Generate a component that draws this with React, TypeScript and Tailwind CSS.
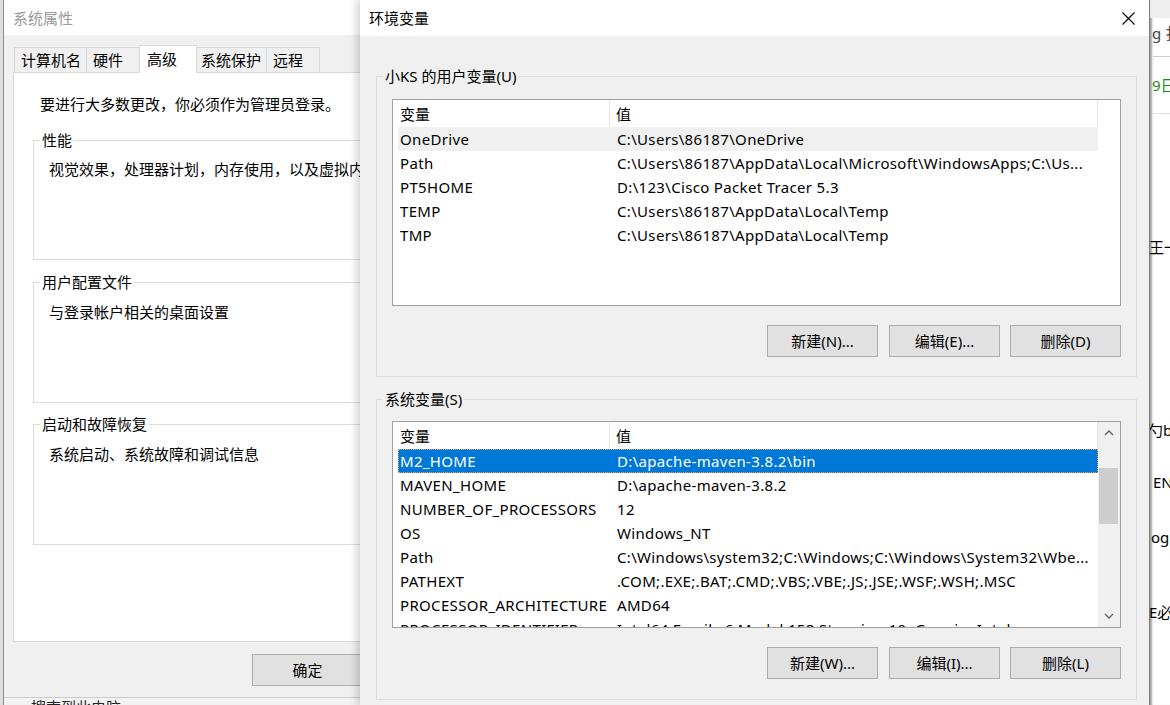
import React from "react";

const userRows: [string, string][] = [
  ["OneDrive", "C:\\Users\\86187\\OneDrive"],
  ["Path", "C:\\Users\\86187\\AppData\\Local\\Microsoft\\WindowsApps;C:\\Us..."],
  ["PT5HOME", "D:\\123\\Cisco Packet Tracer 5.3"],
  ["TEMP", "C:\\Users\\86187\\AppData\\Local\\Temp"],
  ["TMP", "C:\\Users\\86187\\AppData\\Local\\Temp"],
];

const sysRows: [string, string][] = [
  ["M2_HOME", "D:\\apache-maven-3.8.2\\bin"],
  ["MAVEN_HOME", "D:\\apache-maven-3.8.2"],
  ["NUMBER_OF_PROCESSORS", "12"],
  ["OS", "Windows_NT"],
  ["Path", "C:\\Windows\\system32;C:\\Windows;C:\\Windows\\System32\\Wbe..."],
  ["PATHEXT", ".COM;.EXE;.BAT;.CMD;.VBS;.VBE;.JS;.JSE;.WSF;.WSH;.MSC"],
  ["PROCESSOR_ARCHITECTURE", "AMD64"],
  ["PROCESSOR_IDENTIFIER", "Intel64 Family 6 Model 158 Stepping 10, GenuineIntel"],
];

function Chevron({ down }: { down?: boolean }) {
  return (
    <svg width="10" height="6" viewBox="0 0 10 6">
      <path
        d={down ? "M1 1 L5 5 L9 1" : "M1 5 L5 1 L9 5"}
        fill="none"
        stroke="#606060"
        strokeWidth="1.3"
      />
    </svg>
  );
}

function ListView({
  rows,
  selectedIndex,
  hoverIndex,
  scroll,
}: {
  rows: [string, string][];
  selectedIndex?: number;
  hoverIndex?: number;
  scroll?: boolean;
}) {
  return (
    <div className="flex h-[207px] w-[729px] overflow-hidden border border-[#a0a0a0] bg-white">
      <div className="flex min-w-0 flex-1 flex-col overflow-hidden">
        <div className="flex h-[27px] w-[705px] shrink-0">
          <div className="flex w-[217px] items-center border-r border-[#e5e5e5] pl-[7px]">变量</div>
          <div className="flex flex-1 items-center border-r border-[#e5e5e5] pl-[6px]">值</div>
        </div>
        {rows.map(([n, v], i) => {
          const sel = i === selectedIndex;
          const hov = i === hoverIndex;
          return (
            <div
              key={n + i}
              className={`ml-[5px] flex h-[24px] w-[700px] shrink-0 items-center whitespace-nowrap tracking-[0.33px] ${
                sel
                  ? "bg-[#0078d7] text-white outline-1 outline-dotted -outline-offset-1 outline-[#e9a25b]"
                  : hov
                  ? "bg-[#f0f0f0]"
                  : ""
              }`}
            >
              <div className="w-[219px] shrink-0 pl-[2px]">{n}</div>
              <div className="min-w-0 flex-1 overflow-hidden">{v}</div>
            </div>
          );
        })}
      </div>
      {scroll && (
        <div className="flex w-[22px] shrink-0 flex-col bg-[#f0f0f0]">
          <div className="flex h-[22px] shrink-0 items-center justify-center">
            <Chevron />
          </div>
          <div className="h-[24px] shrink-0" />
          <div className="ml-[1px] h-[56px] w-[19px] shrink-0 bg-[#cdcdcd]" />
          <div className="flex-1" />
          <div className="flex h-[22px] shrink-0 items-center justify-center">
            <Chevron down />
          </div>
        </div>
      )}
    </div>
  );
}

function Btn({ children, className = "" }: { children: React.ReactNode; className?: string }) {
  return (
    <div
      className={`flex h-[32px] w-[111px] shrink-0 items-center justify-center border border-[#adadad] bg-[#e1e1e1] ${className}`}
    >
      {children}
    </div>
  );
}

function GroupBox({
  label,
  bg,
  className = "",
  children,
}: {
  label: string;
  bg: string;
  className?: string;
  children?: React.ReactNode;
}) {
  return (
    <div className={`relative border border-[#dcdcdc] ${className}`}>
      <span className={`absolute left-[6px] top-[-11px] px-[2px] leading-[20px] ${bg}`}>{label}</span>
      {children}
    </div>
  );
}

function Tab({ label, cls, selected }: { label: string; cls: string; selected?: boolean }) {
  return (
    <div
      className={`-ml-px flex shrink-0 items-center border border-b-0 border-[#d9d9d9] first:ml-0 ${cls} ${
        selected ? "relative z-10 -mb-px h-[28px] bg-white pb-[2px]" : "h-[25px] bg-[#f0f0f0]"
      }`}
    >
      {label}
    </div>
  );
}

export default function App() {
  return (
    <div className="relative h-[705px] w-[1170px] overflow-hidden bg-[#f3f3f3] font-['Noto_Sans','Noto_Sans_CJK_SC',sans-serif] text-[15px] leading-[20px] text-black">
      {/* background: left edge strip */}
      <div className="absolute left-0 top-0 h-[705px] w-[4px] border-r border-[#8a8a8a] bg-[#dedede]" />
      {/* background: bottom text under left window */}
      <div className="absolute left-[31px] top-[697px] whitespace-nowrap leading-[20px] text-[#222]">搜索到此电脑</div>

      {/* background: right strip (browser page) */}
      <div className="absolute left-[1150px] top-0 h-[705px] w-[20px] overflow-hidden bg-white shadow-[inset_3px_0_2px_-1px_rgba(0,0,0,0.35)]">
        <div className="h-[18px] bg-[#eeeeee]" />
        <div className="absolute left-[2px] top-[23px] whitespace-nowrap text-[#444]">g 扌</div>
        <div className="absolute left-[3px] top-[56px] h-px w-[20px] bg-[#cfcfcf]" />
        <div className="absolute left-[2px] top-[75px] whitespace-nowrap text-[#1b8a1b]">9日</div>
        <div className="absolute left-[3px] top-[113px] h-px w-[20px] bg-[#e0e0e0]" />
        <div className="absolute left-[-1px] top-[237px] whitespace-nowrap">王一</div>
        <div className="absolute left-[-2px] top-[420px] whitespace-nowrap">勺b</div>
        <div className="absolute left-[3px] top-[472px] whitespace-nowrap">EN_</div>
        <div className="absolute left-[1px] top-[527px] whitespace-nowrap">og:</div>
        <div className="absolute left-[-1px] top-[602px] whitespace-nowrap">E必</div>
      </div>

      {/* 系统属性 window */}
      <div className="absolute left-[4px] top-0 flex h-[698px] w-[430px] flex-col border-b border-[#cccccc] bg-[#f0f0f0]">
        <div className="flex h-[35px] shrink-0 items-center bg-white pl-[9px] text-[#9a9a9a]">系统属性</div>
        <div className="ml-[10px] mt-[10px] flex h-[27px] shrink-0 items-end">
          <Tab label="计算机名" cls="w-[73px] pl-[6px]" />
          <Tab label="硬件" cls="w-[54px] pl-[6px]" />
          <Tab label="高级" cls="w-[58px] pl-[7px]" selected />
          <Tab label="系统保护" cls="w-[71px] pl-[4px]" />
          <Tab label="远程" cls="w-[54px] pl-[6px]" />
        </div>
        <div className="ml-[9px] flex h-[570px] w-[420px] shrink-0 flex-col border border-[#d9d9d9] bg-white pt-[21px]">
          <div className="pl-[26px]">要进行大多数更改，你必须作为管理员登录。</div>
          <GroupBox label="性能" bg="bg-white" className="ml-[19px] mt-[26px] h-[120px] w-[380px] pl-[15px] pt-[18px]">
            <div className="whitespace-nowrap">视觉效果，处理器计划，内存使用，以及虚拟内存</div>
          </GroupBox>
          <GroupBox label="用户配置文件" bg="bg-white" className="ml-[19px] mt-[22px] h-[121px] w-[380px] pl-[15px] pt-[19px]">
            <div>与登录帐户相关的桌面设置</div>
          </GroupBox>
          <GroupBox label="启动和故障恢复" bg="bg-white" className="ml-[19px] mt-[21px] h-[121px] w-[380px] pl-[15px] pt-[19px]">
            <div>系统启动、系统故障和调试信息</div>
          </GroupBox>
        </div>
        <Btn className="ml-[248px] mt-[12px]">确定</Btn>
      </div>

      {/* 环境变量 window */}
      <div className="absolute left-[360px] top-0 flex h-[705px] w-[790px] flex-col border-r border-[#7a7a7a] bg-[#f0f0f0] shadow-[-4px_0_7px_rgba(0,0,0,0.16)]">
        <div className="flex h-[36px] shrink-0 items-center justify-between bg-white pl-[9px]">
          <span>环境变量</span>
          <div className="flex h-[36px] w-[41px] items-center justify-center">
            <svg width="13" height="13" viewBox="0 0 13 13">
              <path d="M0.5 0.5 L12.5 12.5 M12.5 0.5 L0.5 12.5" stroke="#000" strokeWidth="1.1" fill="none" />
            </svg>
          </div>
        </div>

        <GroupBox
          label="小KS 的用户变量(U)"
          bg="bg-[#f0f0f0]"
          className="ml-[16px] mt-[40px] w-[761px] shrink-0 px-[15px] pb-[19px] pt-[22px]"
        >
          <ListView rows={userRows} hoverIndex={0} />
          <div className="mt-[19px] flex justify-end">
            <Btn>新建(N)...</Btn>
            <Btn className="ml-[11px]">编辑(E)...</Btn>
            <Btn className="ml-[10px]">删除(D)</Btn>
          </div>
        </GroupBox>

        <GroupBox
          label="系统变量(S)"
          bg="bg-[#f0f0f0]"
          className="ml-[16px] mt-[22px] w-[761px] shrink-0 px-[15px] pb-[20px] pt-[21px]"
        >
          <ListView rows={sysRows} selectedIndex={0} scroll />
          <div className="mt-[19px] flex justify-end">
            <Btn>新建(W)...</Btn>
            <Btn className="ml-[11px]">编辑(I)...</Btn>
            <Btn className="ml-[10px]">删除(L)</Btn>
          </div>
        </GroupBox>
      </div>
    </div>
  );
}
